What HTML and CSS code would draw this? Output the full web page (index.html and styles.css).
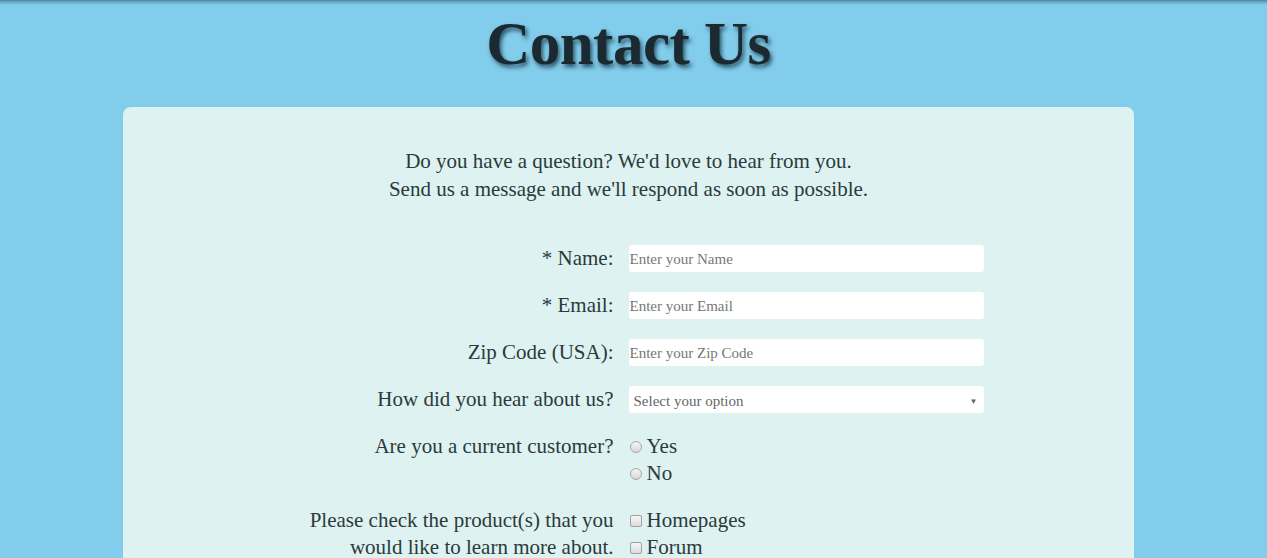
FILE: index.html
```html
<!DOCTYPE html>
<html lang="en">
<head>
<meta charset="utf-8">
<title>Contact Us</title>
<link rel="stylesheet" href="styles.css">
</head>
<body>
<div class="page">
  <h1 class="title">Contact Us</h1>
  <div class="card">
    <p class="intro">Do you have a question? We'd love to hear from you.<br>Send us a message and we'll respond as soon as possible.</p>
    <form class="form">
      <label class="label" for="name">* Name:</label>
      <div class="field"><input class="input" id="name" type="text" placeholder="Enter your Name"></div>

      <label class="label" for="email">* Email:</label>
      <div class="field"><input class="input" id="email" type="text" placeholder="Enter your Email"></div>

      <label class="label" for="zip">Zip Code (USA):</label>
      <div class="field"><input class="input" id="zip" type="text" placeholder="Enter your Zip Code"></div>

      <label class="label" for="hear">How did you hear about us?</label>
      <div class="field">
        <div class="select" id="hear"><span>Select your option</span><span class="arrow">&#9660;</span></div>
      </div>

      <div class="label">Are you a current customer?</div>
      <div class="options">
        <div class="opt"><span class="radio"></span>Yes</div>
        <div class="opt"><span class="radio"></span>No</div>
      </div>

      <div class="label">Please check the product(s) that you<br>would like to learn more about.</div>
      <div class="options">
        <div class="opt"><span class="check"></span>Homepages</div>
        <div class="opt"><span class="check"></span>Forum</div>
      </div>
    </form>
  </div>
</div>
</body>
</html>
```

FILE: styles.css
```css
html, body {
  margin: 0;
  padding: 0;
}
body {
  background: #82cdeb linear-gradient(to bottom, #4f8197 0, #6aaac6 2px, #82cdeb 5px) no-repeat;
  background-size: 100% 6px;
  background-color: #82cdeb;
  font-family: "Liberation Serif", "Times New Roman", serif;
  color: #2b3a3b;
}
.page {
  display: flex;
  flex-direction: column;
  align-items: center;
  padding-top: 8px;
  padding-right: 10px;
}
.title {
  margin: 0;
  font-size: 61px;
  font-weight: bold;
  line-height: 72px;
  color: #1b2a30;
  text-shadow: 2px 3px 4px rgba(10, 40, 55, 0.75);
  letter-spacing: -0.5px;
}
.card {
  margin-top: 27px;
  width: 1011px;
  background: #def2f1;
  border-radius: 8px;
  padding: 40px 0 30px;
  box-sizing: border-box;
  min-height: 460px;
}
.intro {
  margin: 0;
  text-align: center;
  font-size: 21px;
  line-height: 28px;
}
.form {
  margin-top: 42px;
  display: grid;
  grid-template-columns: 1fr 1fr;
  column-gap: 15px;
  row-gap: 20px;
  padding-right: 15px;
  font-size: 21px;
}
.label {
  text-align: right;
  line-height: 27px;
}
.field {
  width: 355px;
}
.input, .select {
  display: flex;
  align-items: center;
  width: 355px;
  height: 27px;
  box-sizing: border-box;
  border: none;
  border-radius: 3px;
  background: #ffffff;
  padding: 2px 1px 0;
  font-family: "Liberation Serif", "Times New Roman", serif;
  font-size: 15px;
  color: #333;
  outline: none;
}
.input::placeholder {
  color: #777;
}
.select {
  justify-content: space-between;
  padding: 4px 6px 0 5px;
  color: #666;
}
.arrow {
  font-size: 8px;
  color: #666;
}
.options {
  display: flex;
  flex-direction: column;
}
.opt {
  display: flex;
  align-items: center;
  height: 27px;
  line-height: 27px;
}
.radio {
  width: 10px;
  height: 10px;
  border-radius: 50%;
  border: 1px solid #a8a8a8;
  background: linear-gradient(#f4f4f4, #d8d8d8);
  margin: 0 5px 0 1px;
}
.check {
  width: 10px;
  height: 10px;
  border-radius: 2px;
  border: 1px solid #a0a0a0;
  background: linear-gradient(#f6f6f6, #dcdcdc);
  margin: 0 5px 0 1px;
}
```
